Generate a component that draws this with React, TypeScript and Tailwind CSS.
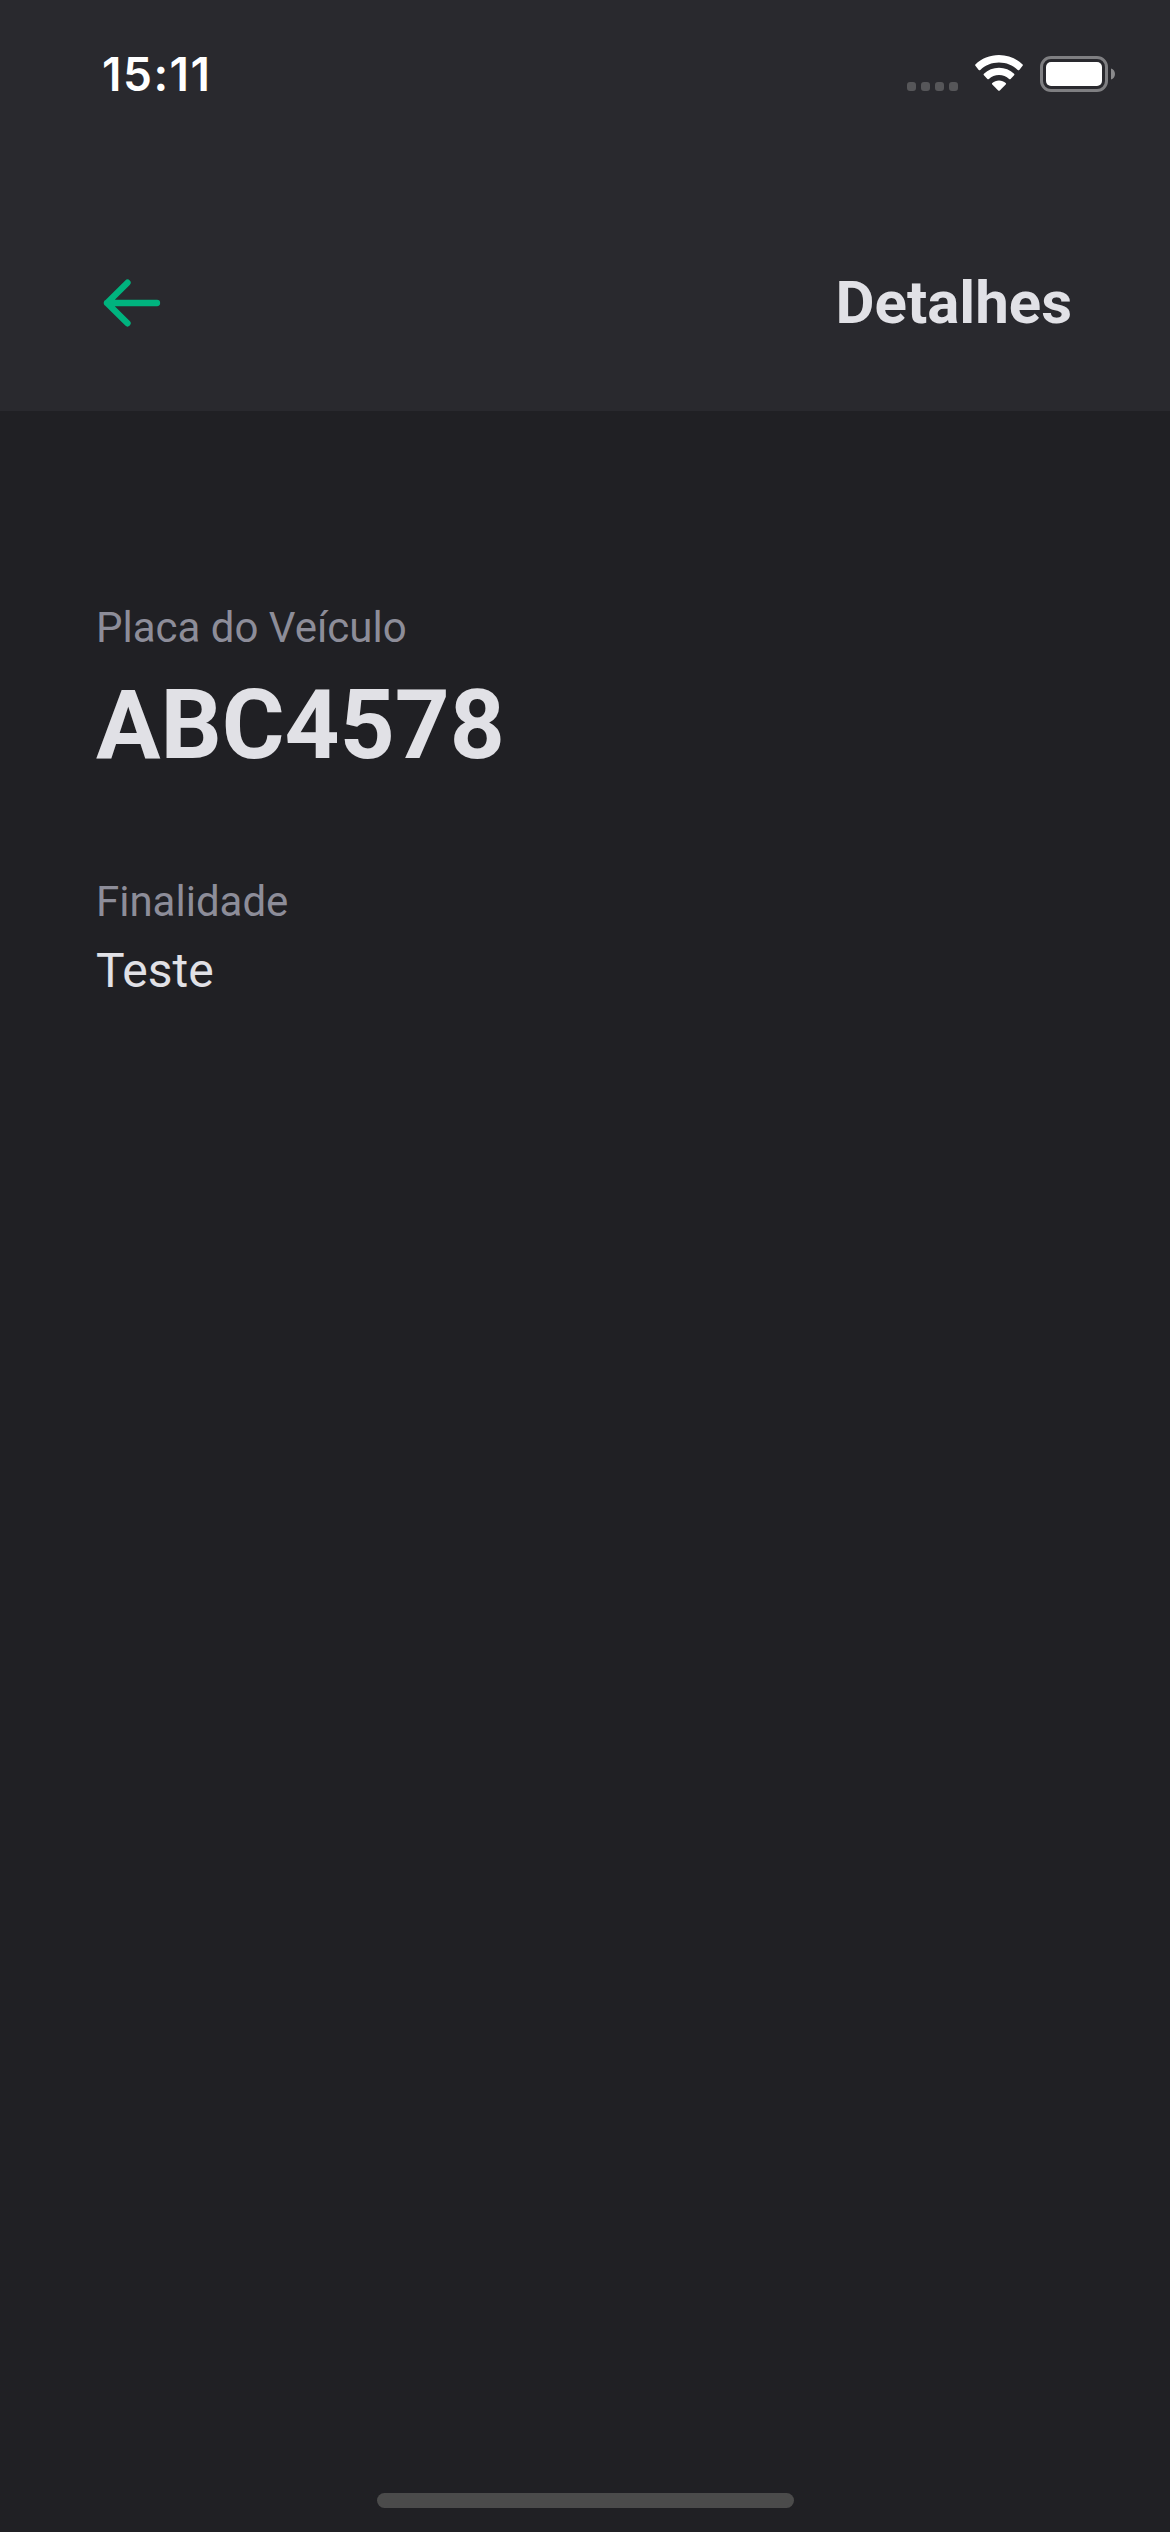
function StatusBar() {
  return (
    <div className="flex h-[148px] items-start justify-between pl-[102px] pr-[55px]">
      <span className="mt-[46px] font-['Inter',sans-serif] text-[46px] leading-[56px] font-semibold tracking-[1.5px] text-white">
        15:11
      </span>
      <div className="mt-[55px] flex">
        <div className="mt-[27px] flex gap-[5px]">
          <span className="size-[9px] rounded-[3px] bg-[#565659]" />
          <span className="size-[9px] rounded-[3px] bg-[#565659]" />
          <span className="size-[9px] rounded-[3px] bg-[#565659]" />
          <span className="size-[9px] rounded-[3px] bg-[#565659]" />
        </div>
        <svg className="ml-[17px]" width="48" height="36" viewBox="0 0 48 36" fill="#fff">
          <path d="M24 0C14.900 0 6.500 3.500 .400 9.400Q-.300 10.100.400 10.800L3.700 14.900Q4.500 15.700 5.300 14.900C10.200 10.200 16.800 7.500 24 7.500S37.800 10.200 42.700 14.900Q43.500 15.700 44.300 14.900L47.600 10.800Q48.300 10.100 47.600 9.400C41.500 3.500 33.100 0 24 0Z" />
          <path d="M24 12.800C18.200 12.800 12.900 15 8.900 18.700Q8.100 19.400 8.900 20.200L12.400 23.900Q13.100 24.600 13.900 23.900C16.600 21.500 20.100 20.100 24 20.100S31.400 21.500 34.100 23.900Q34.900 24.600 35.600 23.900L39.100 20.200Q39.900 19.400 39.100 18.700C35.100 15 29.800 12.800 24 12.800Z" />
          <path d="M24 25.500C21.400 25.500 19.100 26.400 17.300 27.900Q16.600 28.600 17.300 29.400L23.200 35.400Q24 36.200 24.800 35.400L30.700 29.400Q31.400 28.600 30.700 27.900C28.900 26.400 26.600 25.500 24 25.500Z" />
        </svg>
        <svg className="mt-px ml-[17px]" width="75" height="36" viewBox="0 0 75 36" fill="none">
          <rect x="1.500" y="1.500" width="65" height="33" rx="9.500" stroke="#7f7f82" strokeWidth="3" />
          <rect x="6" y="6" width="56" height="24" rx="5" fill="#fff" />
          <path d="M71 12.500C73.500 13.300 75 15.500 75 18S73.500 22.700 71 23.500Z" fill="#8a8a8c" />
        </svg>
      </div>
    </div>
  );
}

function Header() {
  return (
    <header className="h-[411px] bg-[#29292e]">
      <StatusBar />
      <div className="mt-[124px] flex h-[61px] items-center justify-between pr-[98px] pl-[96px]">
        <button type="button" aria-label="Voltar">
          <svg
            width="72"
            height="60"
            viewBox="0 0 72 60"
            fill="none"
            stroke="#00b37e"
            strokeWidth="6.300"
            strokeLinecap="round"
            strokeLinejoin="round"
          >
            <path d="M61 30H11M31.500 9.700 11 30 31.500 50.300" />
          </svg>
        </button>
        <h1 className="text-[60px] leading-[60px] font-bold text-[#e1e1e6]">Detalhes</h1>
      </div>
    </header>
  );
}

export default function App() {
  return (
    <div className="flex h-[2532px] w-[1170px] flex-col overflow-hidden bg-[#202024] font-['Roboto',sans-serif] text-[#e1e1e6]">
      <Header />
      <main className="flex flex-1 flex-col px-24 pt-[192px]">
        <p className="text-[42px] leading-[50px] text-[#8d8d99]">Placa do Veículo</p>
        <p className="mt-[22px] text-[96px] leading-[100px] font-bold">ABC4578</p>
        <p className="mt-[102px] text-[42px] leading-[50px] text-[#8d8d99]">Finalidade</p>
        <p className="mt-[16px] text-[48px] leading-[56px]">Teste</p>
      </main>
      <div className="mb-6 ml-[377px] h-[15px] w-[417px] rounded-full bg-[#4b4b4b]" />
    </div>
  );
}
